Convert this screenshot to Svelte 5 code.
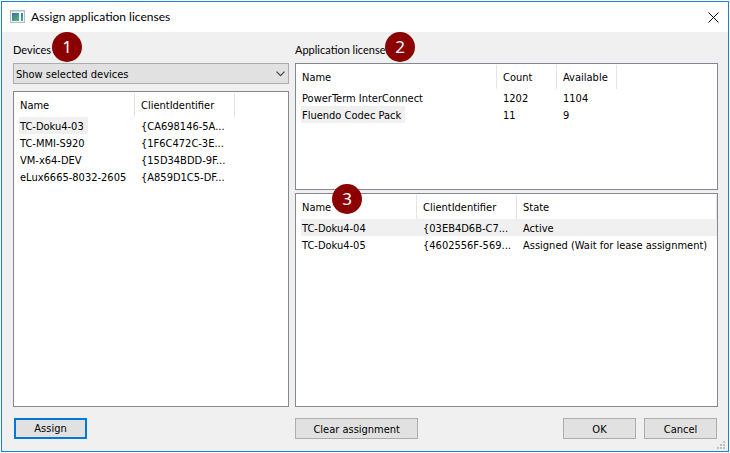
<script lang="ts">
  const devices = [
    { name: 'TC-Doku4-03', id: '{CA698146-5A...' },
    { name: 'TC-MMI-S920', id: '{1F6C472C-3E...' },
    { name: 'VM-x64-DEV', id: '{15D34BDD-9F...' },
    { name: 'eLux6665-8032-2605', id: '{A859D1C5-DF...' }
  ];

  const licenses = [
    { name: 'PowerTerm InterConnect', count: 1202, available: 1104 },
    { name: 'Fluendo Codec Pack', count: 11, available: 9 }
  ];

  const assignments = [
    { name: 'TC-Doku4-04', id: '{03EB4D6B-C7...', state: 'Active' },
    { name: 'TC-Doku4-05', id: '{4602556F-569...', state: 'Assigned (Wait for lease assignment)' }
  ];

  let filter = $state('selected');
  let selectedDevice = $state(0);
  let selectedLicense = $state(1);
  let selectedAssignment = $state(0);
</script>

<div class="window">
  <header class="titlebar">
    <svg class="app-icon" width="16" height="14" viewBox="0 0 16 14" aria-hidden="true">
      <defs>
        <linearGradient id="pane" x1="0" y1="0" x2="0.6" y2="1">
          <stop offset="0" stop-color="#3c6fa0" />
          <stop offset="1" stop-color="#4fae7c" />
        </linearGradient>
      </defs>
      <rect x="0.5" y="0.5" width="14" height="12" fill="#f4f6f8" stroke="#b4bbc4" />
      <rect x="1" y="1" width="13" height="1" fill="#d3dae0" />
      <rect x="2" y="3" width="7" height="8" fill="url(#pane)" />
      <rect x="11" y="3" width="2" height="8" fill="url(#pane)" />
    </svg>
    <h1>Assign application licenses</h1>
    <button class="close" aria-label="Close">
      <svg width="11" height="11" viewBox="0 0 11 11">
        <path d="M0.5 0.5 L10.5 10.5 M10.5 0.5 L0.5 10.5" fill="none" stroke="#000" />
      </svg>
    </button>
  </header>

  <main class="content">
    <section class="column">
      <label class="caption" for="filter">Devices</label>
      <span class="badge first">1</span>
      <div class="combo">
        <select id="filter" bind:value={filter}>
          <option value="selected">Show selected devices</option>
          <option value="all">Show all devices</option>
        </select>
        <svg width="9" height="6" viewBox="0 0 9 6" aria-hidden="true">
          <path d="M0.5 0.7 L4.5 4.7 L8.5 0.7" fill="none" stroke="#444" stroke-width="1.2" />
        </svg>
      </div>
      <div class="list devices">
        <table>
          <thead>
            <tr><th class="name">Name</th><th class="id">ClientIdentifier</th><th class="rest"></th></tr>
          </thead>
          <tbody>
            {#each devices as device, i}
              <tr onclick={() => (selectedDevice = i)}>
                <td><span class:marked={selectedDevice === i}>{device.name}</span></td>
                <td>{device.id}</td>
                <td></td>
              </tr>
            {/each}
          </tbody>
        </table>
      </div>
    </section>

    <section class="column">
      <h2 class="caption">Application license</h2>
      <span class="badge second">2</span>
      <div class="list licenses">
        <table>
          <thead>
            <tr>
              <th class="license">Name</th><th class="number">Count</th><th class="number">Available</th><th class="rest"></th>
            </tr>
          </thead>
          <tbody>
            {#each licenses as license, i}
              <tr onclick={() => (selectedLicense = i)}>
                <td><span class:marked={selectedLicense === i}>{license.name}</span></td>
                <td>{license.count}</td>
                <td>{license.available}</td>
                <td></td>
              </tr>
            {/each}
          </tbody>
        </table>
      </div>
      <div class="list assignments">
        <span class="badge third">3</span>
        <table>
          <thead>
            <tr><th class="name">Name</th><th class="id">ClientIdentifier</th><th>State</th></tr>
          </thead>
          <tbody>
            {#each assignments as item, i}
              <tr class:active={selectedAssignment === i} onclick={() => (selectedAssignment = i)}>
                <td>{item.name}</td>
                <td>{item.id}</td>
                <td>{item.state}</td>
              </tr>
            {/each}
          </tbody>
        </table>
      </div>
    </section>
  </main>

  <footer class="actions">
    <div class="group">
      <button class="push default">Assign</button>
    </div>
    <div class="group">
      <button class="push wide">Clear assignment</button>
      <span class="spacer"></span>
      <button class="push">OK</button>
      <button class="push">Cancel</button>
    </div>
  </footer>

  <svg class="grip" width="8" height="8" viewBox="0 0 8 8" aria-hidden="true">
    <path d="M6 0h2v2h-2z M3 3h2v2h-2z M6 3h2v2h-2z M0 6h2v2h-2z M3 6h2v2h-2z M6 6h2v2h-2z" fill="#bfbfbf" />
  </svg>
</div>

<style>
  :global(body) {
    background: #fff;
  }

  .window {
    position: relative;
    display: flex;
    flex-direction: column;
    box-sizing: border-box;
    min-height: calc(100vh - 2px);
    margin: 1px;
    border: 1px solid #1883d7;
    background: #f0f0f0;
    color: #000;
    font-family: "DejaVu Sans Condensed", Tahoma, "DejaVu Sans", sans-serif;
    font-size: 11px;
    line-height: 16px;
  }

  .titlebar {
    display: flex;
    align-items: center;
    height: 30px;
    padding: 0 9px 0 8px;
    background: #fff;
  }

  h1 {
    flex: 1;
    margin: 0 0 0 5px;
    font-family: Lato, "Segoe UI", sans-serif;
    font-size: 12px;
    font-weight: 400;
  }

  .close {
    display: flex;
    padding: 0;
    border: 0;
    background: none;
  }

  .content,
  .actions {
    display: grid;
    grid-template-columns: 276fr 423fr;
    gap: 6px;
    padding: 0 10px 0 11px;
  }

  .content {
    flex: 1;
  }

  .column {
    position: relative;
    display: flex;
    flex-direction: column;
    min-width: 0;
  }

  .caption {
    margin: 0;
    padding: 10px 0 5px;
    font-family: Lato, "Segoe UI", sans-serif;
    font-size: 11px;
    font-weight: 400;
  }

  .badge {
    position: absolute;
    width: 30px;
    height: 30px;
    border-radius: 50%;
    background: #8b0000;
    color: #fff;
    font-family: "Noto Sans", sans-serif;
    font-size: 17px;
    line-height: 29px;
    text-align: center;
  }

  .first {
    top: 0;
    left: 39px;
  }

  .second {
    top: 0;
    left: 90px;
  }

  .third {
    top: -10px;
    left: 36px;
  }

  .combo {
    position: relative;
    margin-bottom: 7px;
  }

  .combo svg {
    position: absolute;
    top: 8px;
    right: 4px;
    pointer-events: none;
  }

  select {
    display: block;
    box-sizing: border-box;
    width: 100%;
    height: 21px;
    padding: 2px 20px 0 2px;
    border: 1px solid #adadad;
    border-radius: 0;
    appearance: none;
    background: #e1e1e1;
    color: #000;
    font: inherit;
  }

  .list {
    position: relative;
    box-sizing: border-box;
    border: 1px solid #828790;
    background: #fff;
  }

  .devices,
  .assignments {
    flex: 1;
  }

  .licenses {
    flex: 0 0 127px;
    margin-bottom: 3px;
  }

  table {
    width: 100%;
    border-collapse: collapse;
    table-layout: fixed;
  }

  th,
  td {
    box-sizing: border-box;
    padding: 0 0 0 6px;
    font-weight: 400;
    text-align: left;
    white-space: nowrap;
  }

  th {
    height: 25px;
    padding-top: 2px;
    background: linear-gradient(#e5e5e5, #e5e5e5) right bottom / 1px 24px no-repeat;
  }

  th.rest {
    background: none;
  }

  td {
    height: 17px;
    padding-top: 2px;
    line-height: 15px;
  }

  .name {
    width: 121px;
  }

  .id {
    width: 100px;
  }

  .license {
    width: 201px;
  }

  .number {
    width: 60px;
  }

  .marked {
    display: inline-block;
    margin: -2px 0 0 -1px;
    padding: 2px 4px 0 1px;
    background: #f0f0f0;
    vertical-align: top;
  }

  .active {
    background: linear-gradient(#f0f0f0, #f0f0f0) 5px 0 no-repeat;
  }

  .actions {
    padding: 11px 11px 12px 12px;
  }

  .group {
    display: flex;
    gap: 8px;
  }

  .spacer {
    flex: 1;
  }

  .push {
    box-sizing: border-box;
    width: 73px;
    height: 21px;
    padding: 2px 0 0;
    border: 1px solid #adadad;
    background: #e1e1e1;
    color: #000;
    font: inherit;
  }

  .default {
    padding: 1px 0 0;
    border: 2px solid #0078d7;
  }

  .wide {
    width: 123px;
  }

  .grip {
    position: absolute;
    right: 3px;
    bottom: 2px;
  }
</style>
